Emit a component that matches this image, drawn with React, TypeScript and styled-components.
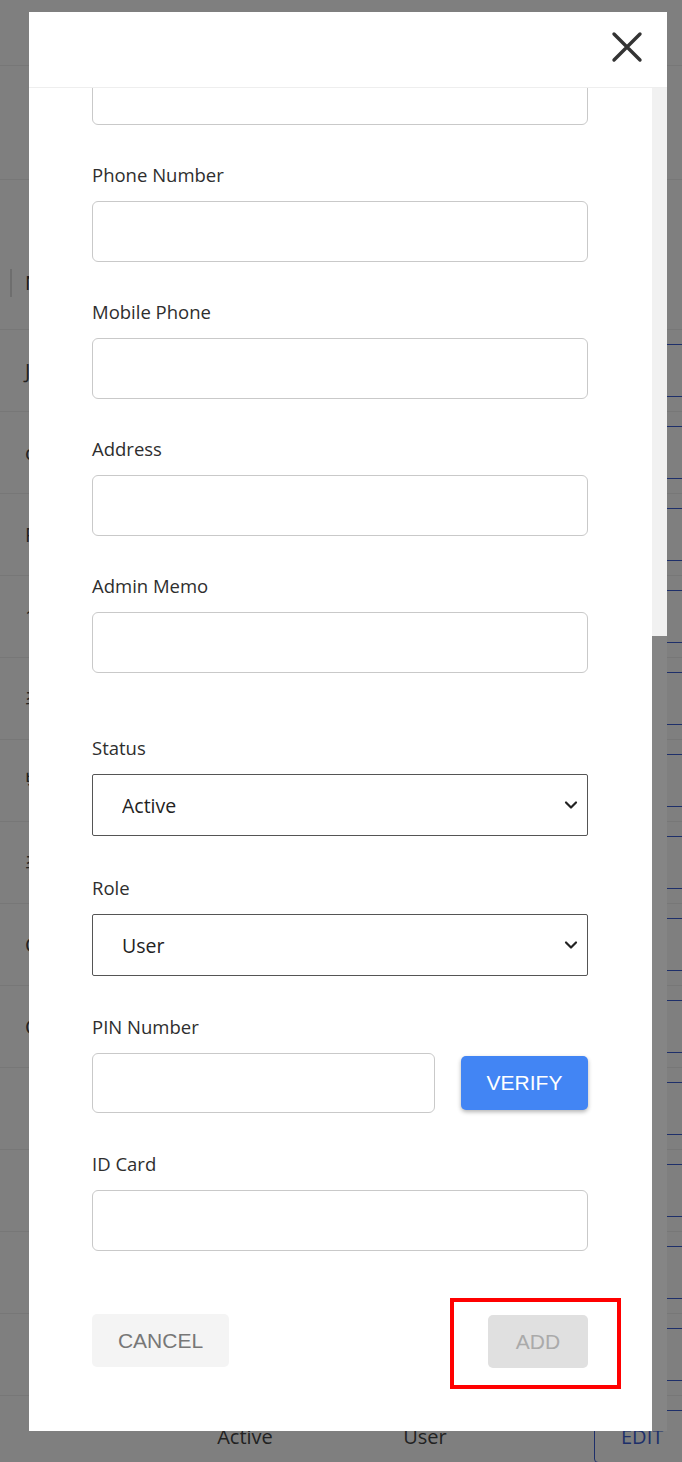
import React, { useLayoutEffect, useRef } from "react";
import styled, { createGlobalStyle } from "styled-components";

const LABEL_FONT = `"Open Sans", "Noto Sans", "Noto Sans CJK KR", sans-serif`;
const BUTTON_FONT = `"Liberation Sans", Arial, sans-serif`;

const GlobalStyle = createGlobalStyle`
  * { box-sizing: border-box; }
  html, body { margin: 0; padding: 0; }
  body {
    background: #ffffff;
    font-family: ${LABEL_FONT};
    color: #333;
    overflow: hidden;
  }
`;

/* ---------- Background page (behind the modal) ---------- */

const Page = styled.div`
  width: 682px;
  height: 1462px;
  overflow: hidden;
  background: #fff;
`;

const TopBar = styled.div`
  height: 66px;
  border-bottom: 1px solid #eee;
`;

const Toolbar = styled.div`
  height: 114px;
  border-bottom: 1px solid #eee;
`;

const TableHead = styled.div`
  height: 150px;
  border-bottom: 1px solid #eee;
  display: flex;
  align-items: flex-end;
  padding: 0 0 32px 10px;
`;

const HeadCell = styled.div`
  border-left: 2px solid #ddd;
  height: 28px;
  padding-left: 13px;
  font: 20px/28px ${LABEL_FONT};
  color: #333;
`;

const Row = styled.div`
  height: 82px;
  border-bottom: 1px solid #eee;
  display: grid;
  grid-template-columns: 190px 110px 70px 110px 114px 120px;
  align-items: start;
  overflow: hidden;
`;

const Cell = styled.div<{ $align?: string }>`
  height: 81px;
  display: flex;
  align-items: center;
  justify-content: ${(p) => p.$align ?? "center"};
  padding-left: ${(p) => (p.$align === "flex-start" ? "25px" : "0")};
  font: 20px ${LABEL_FONT};
  color: #444;
  white-space: nowrap;
`;

const EditButton = styled.div`
  margin-top: 14px;
  height: 53px;
  width: 120px;
  border: 1px solid #3d5fd4;
  border-radius: 4px;
  display: flex;
  align-items: center;
  padding-left: 26px;
  font: 20px ${LABEL_FONT};
  color: #3d5fd4;
`;

/* ---------- Modal ---------- */

const Overlay = styled.div`
  position: fixed;
  inset: 0;
  background: rgba(0, 0, 0, 0.5);
  display: flex;
  align-items: flex-start;
  padding: 12px 0 0 29px;
`;

const Modal = styled.div`
  width: 638px;
  height: 1419px;
  background: #fff;
  display: flex;
  flex-direction: column;
`;

const Header = styled.div`
  flex: none;
  height: 76px;
  border-bottom: 1px solid #eee;
  display: flex;
  justify-content: flex-end;
  align-items: flex-start;
  padding: 19px 24px 0 0;
`;

const CloseButton = styled.button`
  width: 32px;
  height: 32px;
  padding: 0;
  border: none;
  background: transparent;
  display: flex;
  cursor: pointer;
`;

const Body = styled.div`
  flex: 1;
  min-height: 0;
  display: flex;
`;

const Viewport = styled.div`
  flex: 1;
  min-width: 0;
  overflow: hidden;
`;

const ScrollTrack = styled.div`
  flex: none;
  width: 15px;
  background: #f1f1f1;
  display: flex;
  flex-direction: column;
  justify-content: flex-end;
`;

const ScrollThumb = styled.div`
  height: 795px;
  background: #858585;
`;

const Form = styled.div`
  display: flex;
  flex-direction: column;
  padding: 0 64px 63px 63px;
`;

const Field = styled.div<{ $gap?: number }>`
  display: flex;
  flex-direction: column;
  margin-top: ${(p) => p.$gap ?? 38}px;
`;

const Label = styled.label`
  font: 18.5px/24px ${LABEL_FONT};
  color: #2e2e2e;
  margin-bottom: 14px;
`;

const TextInput = styled.input<{ $h?: number }>`
  width: 100%;
  height: ${(p) => p.$h ?? 61}px;
  border: 1px solid #c9c9c9;
  border-radius: 6px;
  background: #fff;
  font: 18px ${LABEL_FONT};
  padding: 0 16px;
  outline: none;
`;

const SelectWrap = styled.div`
  position: relative;
`;

const Select = styled.select`
  appearance: none;
  -webkit-appearance: none;
  width: 100%;
  height: 62px;
  border: 1px solid #555;
  border-radius: 2px;
  background: #fff;
  padding-left: 29px;
  font: 19.5px ${LABEL_FONT};
  color: #222;
  outline: none;
`;

const Chevron = styled.svg`
  position: absolute;
  right: 10px;
  top: 50%;
  transform: translateY(-50%);
  pointer-events: none;
`;

const PinRow = styled.div`
  display: flex;
  align-items: center;
  gap: 26px;
`;

const PinInput = styled(TextInput)`
  width: 343px;
  flex: none;
`;

const VerifyButton = styled.button`
  width: 127px;
  height: 54px;
  border: none;
  border-radius: 5px;
  background: #4285f4;
  color: #fff;
  font: 21px ${BUTTON_FONT};
  box-shadow: 0 2px 4px rgba(0, 0, 0, 0.3);
  cursor: pointer;
`;

const Actions = styled.div`
  display: flex;
  justify-content: space-between;
  align-items: flex-start;
  margin-top: 63px;
`;

const ActionButton = styled.button<{ $variant: "cancel" | "add" }>`
  height: 53px;
  width: ${(p) => (p.$variant === "cancel" ? 137 : 100)}px;
  margin-top: ${(p) => (p.$variant === "cancel" ? 0 : 1)}px;
  border: none;
  border-radius: 5px;
  background: ${(p) => (p.$variant === "cancel" ? "#f4f4f4" : "#e0e0e0")};
  color: ${(p) => (p.$variant === "cancel" ? "#777" : "#aaa")};
  font: 21px ${BUTTON_FONT};
`;

const Highlight = styled.div`
  position: relative;
  display: flex;
  &::after {
    content: "";
    position: absolute;
    left: -38px;
    right: -33px;
    top: -16px;
    bottom: -21px;
    border: 4px solid #ff0000;
    pointer-events: none;
  }
`;

/* ---------- Data ---------- */

const textFields = ["Phone Number", "Mobile Phone", "Address", "Admin Memo"];

const rows = [
  "Jane",
  "chris",
  "Peter",
  "1004",
  "최민수",
  "박지훈",
  "최유진",
  "Chloe",
  "Cathy",
  "",
  "",
  "",
  "",
  "",
];

const ChevronIcon = () => (
  <Chevron width="14" height="9" viewBox="0 0 14 9" fill="none">
    <path d="M2 2 L7 7 L12 2" stroke="#222" strokeWidth="2.2" strokeLinecap="round" strokeLinejoin="round" />
  </Chevron>
);

export default function App() {
  const viewRef = useRef<HTMLDivElement>(null);

  useLayoutEffect(() => {
    const el = viewRef.current;
    if (el) el.scrollTop = el.scrollHeight;
  }, []);

  return (
    <>
      <GlobalStyle />
      <Page>
        <TopBar />
        <Toolbar />
        <TableHead>
          <HeadCell>Name</HeadCell>
        </TableHead>
        {rows.map((name, i) => (
          <Row key={i}>
            <Cell $align="flex-start">{name}</Cell>
            <Cell>Active</Cell>
            <Cell />
            <Cell>User</Cell>
            <Cell />
            <EditButton>EDIT</EditButton>
          </Row>
        ))}
      </Page>

      <Overlay>
        <Modal>
          <Header>
            <CloseButton aria-label="Close">
              <svg width="32" height="32" viewBox="0 0 32 32">
                <path d="M3 3 L29 29 M29 3 L3 29" stroke="#333" strokeWidth="3.4" strokeLinecap="round" />
              </svg>
            </CloseButton>
          </Header>
          <Body>
            <Viewport ref={viewRef}>
              <Form>
                <TextInput aria-label="Name" />
                {textFields.map((label) => (
                  <Field key={label}>
                    <Label>{label}</Label>
                    <TextInput />
                  </Field>
                ))}
                <Field $gap={63}>
                  <Label>Status</Label>
                  <SelectWrap>
                    <Select defaultValue="Active">
                      <option>Active</option>
                      <option>Inactive</option>
                    </Select>
                    <ChevronIcon />
                  </SelectWrap>
                </Field>
                <Field $gap={40}>
                  <Label>Role</Label>
                  <SelectWrap>
                    <Select defaultValue="User">
                      <option>User</option>
                      <option>Admin</option>
                    </Select>
                    <ChevronIcon />
                  </SelectWrap>
                </Field>
                <Field $gap={39}>
                  <Label>PIN Number</Label>
                  <PinRow>
                    <PinInput $h={60} />
                    <VerifyButton>VERIFY</VerifyButton>
                  </PinRow>
                </Field>
                <Field $gap={39}>
                  <Label>ID Card</Label>
                  <TextInput />
                </Field>
                <Actions>
                  <ActionButton $variant="cancel">CANCEL</ActionButton>
                  <Highlight>
                    <ActionButton $variant="add" disabled>
                      ADD
                    </ActionButton>
                  </Highlight>
                </Actions>
              </Form>
            </Viewport>
            <ScrollTrack>
              <ScrollThumb />
            </ScrollTrack>
          </Body>
        </Modal>
      </Overlay>
    </>
  );
}
